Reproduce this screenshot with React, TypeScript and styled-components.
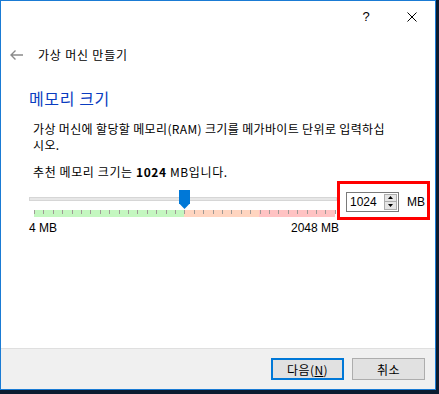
import { createGlobalStyle } from 'styled-components'
import styled from 'styled-components'

const GlobalStyle = createGlobalStyle`
  html, body {
    margin: 0;
    padding: 0;
    background: #0b1c30;
  }
  body {
    font-family: 'Noto Sans CJK KR', 'Liberation Sans', sans-serif;
    font-size: 12px;
    color: #000;
  }
`

const Window = styled.div`
  width: 434px;
  height: 388px;
  border: 1px solid #1a7bd4;
  background: #fff;
  display: flex;
  flex-direction: column;
`

const TitleBar = styled.div`
  height: 31px;
  display: flex;
  justify-content: flex-end;
  align-items: center;
`

const CaptionButton = styled.div`
  width: 46px;
  height: 31px;
  display: flex;
  align-items: center;
  justify-content: center;
  font-family: 'Liberation Sans', sans-serif;
  font-size: 13px;
`

const Header = styled.div`
  display: flex;
  align-items: center;
  height: 20px;
  margin-top: 13px;
  padding-left: 9px;
  gap: 15px;
`

const HeaderTitle = styled.span`
  font-size: 12px;
  line-height: 20px;
  letter-spacing: 0.8px;
`

const Content = styled.div`
  flex: 1;
  padding-left: 28px;
  display: flex;
  flex-direction: column;
`

const Heading = styled.div`
  margin-top: 23px;
  font-size: 16px;
  line-height: 20px;
  letter-spacing: 0.6px;
  color: #0a3cc0;
`

const Paragraph = styled.div<{ gap: number; spacing: number }>`
  margin-top: ${(p) => p.gap}px;
  padding-left: 4px;
  line-height: 16px;
  white-space: nowrap;
  letter-spacing: ${(p) => p.spacing}px;
`

const SliderRow = styled.div`
  display: flex;
  margin-top: 1px;
  height: 39px;
`

const Slider = styled.div`
  position: relative;
  width: 308px;
`

const Track = styled.div`
  margin-top: 16px;
  height: 2px;
  background: #e7e7e7;
  border: 1px solid #d6d6d6;
  width: 306px;
`

const TickBar = styled.div`
  margin-top: 9px;
  margin-left: 5px;
  width: 301px;
  height: 7px;
  display: flex;
  position: relative;
`

const Zone = styled.div<{ w: number; c: string }>`
  width: ${(p) => p.w}px;
  background: ${(p) => p.c};
`

const Tick = styled.div`
  position: absolute;
  top: 0;
  width: 1px;
  height: 4px;
  background: #a09a96;
`

const Thumb = styled.div`
  position: absolute;
  left: 150px;
  top: 9px;
  width: 11px;
  height: 19px;
  background: #0078d7;
  clip-path: polygon(0 0, 100% 0, 100% 70%, 50% 100%, 0 70%);
`

const Highlight = styled.div`
  box-sizing: border-box;
  width: 93px;
  height: 39px;
  border: 3px solid #ff0000;
  display: flex;
  align-items: center;
  padding-left: 6px;
  padding-top: 2px;
  gap: 8px;
`

const SpinBox = styled.div`
  box-sizing: border-box;
  width: 53px;
  height: 20px;
  border: 1px solid #7a7a7a;
  display: flex;
  align-items: center;
  justify-content: space-between;
  padding-left: 3px;
`

const SpinValue = styled.span`
  font-family: 'Liberation Sans', sans-serif;
  font-size: 12px;
`

const SpinButtons = styled.div`
  width: 13px;
  height: 16px;
  margin-right: 1px;
  display: flex;
  flex-direction: column;
`

const SpinButton = styled.div`
  flex: 1;
  background: #e5e5e5;
  border: 1px solid #adadad;
  display: flex;
  align-items: center;
  justify-content: center;
  & + & {
    border-top: none;
  }
`

const Unit = styled.span`
  font-family: 'Liberation Sans', sans-serif;
  font-size: 12px;
`

const Labels = styled.div`
  width: 310px;
  display: flex;
  justify-content: space-between;
  line-height: 16px;
  font-family: 'Liberation Sans', sans-serif;
`

const Footer = styled.div`
  box-sizing: border-box;
  height: 41px;
  border-top: 1px solid #dfdfdf;
  background: #f0f0f0;
  display: flex;
  justify-content: flex-end;
  align-items: flex-start;
  padding-top: 9px;
  padding-right: 10px;
  gap: 8px;
`

const Button = styled.div<{ primary?: boolean }>`
  width: 73px;
  height: 22px;
  box-sizing: border-box;
  background: #e1e1e1;
  border: ${(p) => (p.primary ? '2px solid #0078d7' : '1px solid #adadad')};
  display: flex;
  align-items: center;
  justify-content: center;
  font-size: 12px;
  letter-spacing: 0.4px;
`

const ticks = Array.from({ length: 33 }, (_, i) => Math.round(i * 9.4))

const App = () => {
  return (
    <>
      <GlobalStyle />
      <Window>
        <TitleBar>
          <CaptionButton>?</CaptionButton>
          <CaptionButton>
            <svg width="10" height="10" viewBox="0 0 10 10">
              <path d="M0.5 0.5 L9.5 9.5 M9.5 0.5 L0.5 9.5" stroke="#000" strokeWidth="1" />
            </svg>
          </CaptionButton>
        </TitleBar>
        <Header>
          <svg width="13" height="10" viewBox="0 0 13 10">
            <path d="M1 5 H13 M5.5 0.5 L1 5 L5.5 9.5" stroke="#8a8a8a" strokeWidth="1.4" fill="none" />
          </svg>
          <HeaderTitle>가상 머신 만들기</HeaderTitle>
        </Header>
        <Content>
          <Heading>메모리 크기</Heading>
          <Paragraph gap={13} spacing={0.35}>
            가상 머신에 할당할 메모리(RAM) 크기를 메가바이트 단위로 입력하십
            <br />
            시오.
          </Paragraph>
          <Paragraph gap={11} spacing={0.6}>
            추천 메모리 크기는 <b>1024</b> MB입니다.
          </Paragraph>
          <SliderRow>
            <Slider>
              <Track />
              <TickBar>
                <Zone w={150} c="#c4f7c0" />
                <Zone w={75} c="#ffd5c0" />
                <Zone w={76} c="#ffc3c3" />
                {ticks.map((x) => (
                  <Tick key={x} style={{ left: x }} />
                ))}
              </TickBar>
              <Thumb />
            </Slider>
            <Highlight>
              <SpinBox>
                <SpinValue>1024</SpinValue>
                <SpinButtons>
                  <SpinButton>
                    <svg width="5" height="3" viewBox="0 0 5 3">
                      <path d="M0 3 L2.5 0 L5 3 Z" fill="#000" />
                    </svg>
                  </SpinButton>
                  <SpinButton>
                    <svg width="5" height="3" viewBox="0 0 5 3">
                      <path d="M0 0 L2.5 3 L5 0 Z" fill="#000" />
                    </svg>
                  </SpinButton>
                </SpinButtons>
              </SpinBox>
              <Unit>MB</Unit>
            </Highlight>
          </SliderRow>
          <Labels>
            <span>4 MB</span>
            <span>2048 MB</span>
          </Labels>
        </Content>
        <Footer>
          <Button primary>
            다음(<u>N</u>)
          </Button>
          <Button>취소</Button>
        </Footer>
      </Window>
    </>
  )
}

export default App
